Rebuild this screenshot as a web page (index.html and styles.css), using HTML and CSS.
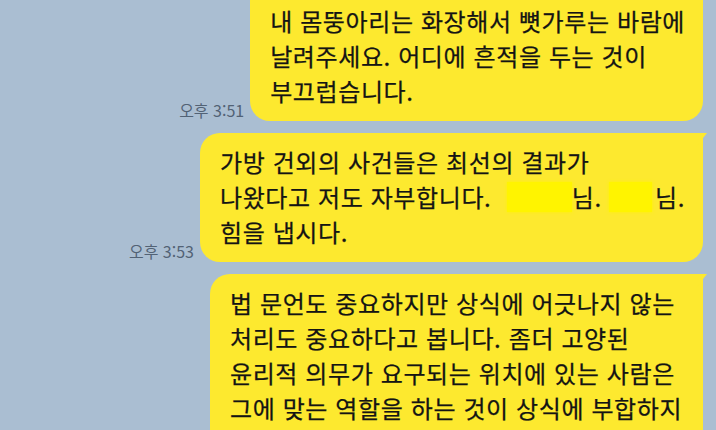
FILE: index.html
```html
<!DOCTYPE html>
<html lang="ko">
<head>
<meta charset="utf-8">
<title>Chat</title>
<link rel="stylesheet" href="styles.css">
</head>
<body>
<div class="chat">
  <div class="row">
    <span class="time">오후 3:51</span>
    <div class="bubble first">내 몸뚱아리는 화장해서 뼛가루는 바람에<br>날려주세요. 어디에 흔적을 두는 것이<br>부끄럽습니다.</div>
  </div>
  <div class="row">
    <span class="time">오후 3:53</span>
    <div class="bubble tail">가방 건외의 사건들은 최선의 결과가<br>나왔다고 저도 자부합니다. <span class="redact r1"></span>님. <span class="redact r2"></span>님.<br>힘을 냅시다.</div>
  </div>
  <div class="row">
    <div class="bubble tail wide">법 문언도 중요하지만 상식에 어긋나지 않는<br>처리도 중요하다고 봅니다. 좀더 고양된<br>윤리적 의무가 요구되는 위치에 있는 사람은<br>그에 맞는 역할을 하는 것이 상식에 부합하지</div>
  </div>
</div>
</body>
</html>
```
FILE: styles.css
```css
html, body {
  margin: 0;
  padding: 0;
}
body {
  background: #aabed2;
  width: 716px;
  height: 430px;
  overflow: hidden;
  font-family: "Noto Sans CJK KR", "Noto Sans", sans-serif;
}
.chat {
  display: flex;
  flex-direction: column;
  gap: 12px;
  padding-right: 13px;
}
.row {
  display: flex;
  justify-content: flex-end;
  align-items: flex-end;
  gap: 6px;
}
.time {
  font-size: 16px;
  line-height: 16px;
  color: #526275;
  margin-bottom: 3px;
  white-space: nowrap;
}
.bubble {
  position: relative;
  background: #fde92f;
  color: #141414;
  font-size: 24px;
  letter-spacing: 0.6px;
  line-height: 35px;
  padding: 11px 18px 13px 20px;
  border-radius: 20px;
  white-space: nowrap;
  -webkit-text-stroke: 0.25px #141414;
}
.bubble.first {
  margin-top: -40px;
  padding-top: 43px;
  border-top-right-radius: 0;
  border-top-left-radius: 0;
}
.bubble.tail {
  border-top-right-radius: 3px;
}
.bubble.tail::after {
  content: "";
  position: absolute;
  top: 0;
  right: -4px;
  width: 11px;
  height: 14px;
  background: #fde92f;
  clip-path: polygon(0 0, 100% 0, 0 100%);
}
.bubble.wide {
  width: 493px;
  box-sizing: border-box;
  padding-bottom: 40px;
}
.redact {
  display: inline-block;
  height: 30px;
  background: #fff400;
  vertical-align: -5px;
  box-shadow: 0 0 3px #fff400;
}
.r1 {
  width: 65px;
  margin-left: 8px;
}
.r2 {
  width: 43px;
  margin-right: 3px;
}
```
